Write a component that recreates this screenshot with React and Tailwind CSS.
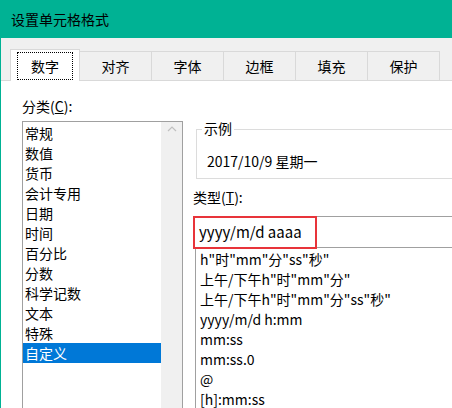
import React from 'react';

const tabs = ['数字', '对齐', '字体', '边框', '填充', '保护'];
const cats = ['常规', '数值', '货币', '会计专用', '日期', '时间', '百分比', '分数', '科学记数', '文本', '特殊', '自定义'];
const types = ['h"时"mm"分"ss"秒"', '上午/下午h"时"mm"分"', '上午/下午h"时"mm"分"ss"秒"', 'yyyy/m/d h:mm', 'mm:ss', 'mm:ss.0', '@', '[h]:mm:ss'];

const App = () => {
  return (
    <div className="w-[452px] h-[408px] overflow-hidden bg-[#f0f0f0] text-[14px] text-black border-l border-[#00b294]" style={{ fontFamily: '"Microsoft YaHei", "Noto Sans CJK SC", sans-serif' }}>
      <div className="h-[38px] bg-[#00b294] flex items-center pl-[10px] text-[14px]">设置单元格格式</div>
      <div className="flex pl-[9px] h-[42px] items-end">
        {tabs.map((t, i) => (
          <div key={t} className={i === 0
            ? 'w-[70px] h-[32px] bg-white border border-b-0 border-[#d9d9d9] flex items-center justify-center relative z-10 -mb-px'
            : 'w-[72px] h-[29px] border border-b-0 border-[#d9d9d9] border-l-0 flex items-center justify-center'}>
            {i === 0 ? <span className="border border-dotted border-black px-[13px] leading-[26px]">{t}</span> : t}
          </div>
        ))}
      </div>
      <div className="bg-white border-t border-[#d9d9d9] h-[328px] flex pl-[21px]">
        <div className="w-[161px] shrink-0">
          <div className="mt-[15px] h-[20px] leading-[20px]">分类(<span className="underline">C</span>):</div>
          <div className="mt-[5px] h-[300px] border border-[#a0a0a0] flex">
            <div className="flex-1 pt-[1px]">
              {cats.map((c, i) => (
                <div key={c} className={i === 11 ? 'h-[20px] leading-[20px] bg-[#0078d7] text-white pl-[2px]' : 'h-[20px] leading-[20px] pl-[2px]'}>{c}</div>
              ))}
            </div>
            <div className="w-[21px] bg-[#f0f0f0] flex justify-center pt-[3px]">
              <svg width="10" height="8" viewBox="0 0 10 8"><path d="M1 6 L5 2 L9 6" fill="none" stroke="#c0c0c0" strokeWidth="1.2" /></svg>
            </div>
          </div>
        </div>
        <div className="flex-1 ml-[10px]">
          <div className="mt-[48px] relative border border-[#dcdcdc] border-r-0 h-[50px] ml-[3px]">
            <span className="absolute -top-[12px] left-[5px] bg-white px-[2px] leading-[20px]">示例</span>
            <div className="pl-[10px] pt-[21px] leading-[20px]">2017/10/9 星期一</div>
          </div>
          <div className="mt-[8px] h-[20px] leading-[20px]">类型(<span className="underline">T</span>):</div>
          <div className="mt-[9px] h-[32px] border-b border-t border-[#a0a0a0] relative">
            <div className="absolute -top-[1px] left-0 w-[124px] h-[33px] border-2 border-[#e8343a]" />
            <div className="pl-[6px] leading-[30px] text-[15px]">yyyy/m/d aaaa</div>
          </div>
          <div className="border-l border-[#a0a0a0] ml-[2px] h-[200px] pt-[1px]">
            {types.map((t) => (
              <div key={t} className="h-[20px] leading-[20px] pl-[4px]">{t}</div>
            ))}
          </div>
        </div>
      </div>
    </div>
  );
};

export default App;
